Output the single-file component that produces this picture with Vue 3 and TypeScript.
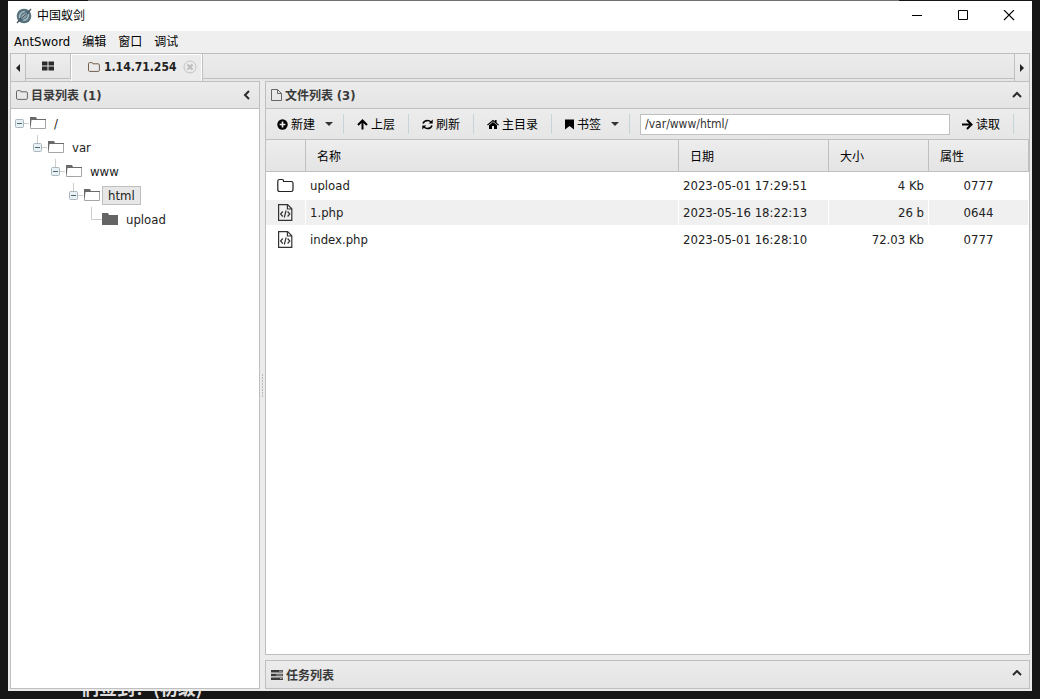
<script setup lang="ts">
import { ref } from 'vue'

interface TreeNode {
  name: string
  depth: number
  leaf?: boolean
}

interface FileRow {
  name: string
  date: string
  size: string
  mode: string
  folder?: boolean
}

interface Tool {
  icon: string
  label: string
  menu?: boolean
}

const menus: string[] = ['AntSword', '编辑', '窗口', '调试']

const tree: TreeNode[] = [
  { name: '/', depth: 0 },
  { name: 'var', depth: 1 },
  { name: 'www', depth: 2 },
  { name: 'html', depth: 3 },
  { name: 'upload', depth: 4, leaf: true },
]

const tools: Tool[] = [
  { icon: 'plus', label: '新建', menu: true },
  { icon: 'up', label: '上层' },
  { icon: 'refresh', label: '刷新' },
  { icon: 'home', label: '主目录' },
  { icon: 'bookmark', label: '书签', menu: true },
]

const files: FileRow[] = [
  { name: 'upload', date: '2023-05-01 17:29:51', size: '4 Kb', mode: '0777', folder: true },
  { name: '1.php', date: '2023-05-16 18:22:13', size: '26 b', mode: '0644' },
  { name: 'index.php', date: '2023-05-01 16:28:10', size: '72.03 Kb', mode: '0777' },
]

const path = ref('/var/www/html/')
const selected = ref('html')
</script>

<template>
  <div class="desktop">
    <div class="behind-top"></div>
    <div class="window">
      <header class="titlebar">
        <svg class="logo" viewBox="0 0 16 16" width="16" height="16">
          <circle cx="8" cy="8" r="7.3" fill="#54717d" />
          <path d="M3.6 10.200C3 6.800 5 4 8.800 3.600M12.400 5.800c.6 3.400-1.400 6.200-5.200 6.600" fill="none" stroke="#a9bac1" stroke-width="1.500" />
          <path d="M1 15 6 9.200M10 6.600 15 1" stroke="#44565f" stroke-width="1.300" />
          <path d="M5.400 10.400c-.6-2.600.8-4.800 3.400-4.900l2-1.300-.2 2.400c.4 2.200-1 4-3.200 4.200z" fill="#8fa5ae" />
          <path d="M6.200 9.800 10 6.200" stroke="#44565f" stroke-width="1" />
        </svg>
        <span class="title">中国蚁剑</span>
        <div class="controls">
          <button type="button" aria-label="最小化">
            <svg viewBox="0 0 12 12" width="12" height="12"><path d="M1 5.500h10" stroke="#000" /></svg>
          </button>
          <button type="button" aria-label="最大化">
            <svg viewBox="0 0 12 12" width="12" height="12"><path d="M1.500.5h9v9h-9z" fill="none" stroke="#000" /></svg>
          </button>
          <button type="button" aria-label="关闭">
            <svg viewBox="0 0 12 12" width="12" height="12"><path d="m1 0 10 10M11 0 1 10" stroke="#000" stroke-width="1.100" /></svg>
          </button>
        </div>
      </header>

      <nav class="menubar">
        <button v-for="m in menus" :key="m" type="button">{{ m }}</button>
      </nav>

      <main class="frame">
        <div class="tabbar">
          <button type="button" class="scroll left" aria-label="向左">
            <svg viewBox="0 0 4 8" width="4" height="8"><path d="M4 0v8L0 4z" fill="#222" /></svg>
          </button>
          <button type="button" class="tab home" aria-label="主页">
            <svg viewBox="0 0 12 10" width="12" height="10"><path d="M0 .5h5.500v4H0zM6.500.5H12v4H6.500zM0 5.500h5.500v4H0zM6.500 5.500H12v4H6.500z" fill="#2b2b2b" /></svg>
          </button>
          <div class="tab active">
            <svg viewBox="0 0 12 10" width="12" height="10"><path d="M.5 8.2V1.8q0-1.2 1.2-1.2h2.1q1 0 1 1v.2h5.400q1.200 0 1.200 1.200v5.200q0 1.200-1.200 1.200H1.700Q.5 9.400.5 8.200z" fill="none" stroke="#76604c" /></svg>
            <span>1.14.71.254</span>
            <button type="button" class="close" aria-label="关闭标签">
              <svg viewBox="0 0 14 14" width="14" height="14">
                <circle cx="7" cy="7" r="6" fill="none" stroke="#c3c3c3" />
                <path d="m4.500 4.500 5 5m0-5-5 5" stroke="#bcbcbc" stroke-width="2" />
              </svg>
            </button>
          </div>
          <div class="tab-rest"></div>
          <button type="button" class="scroll right" aria-label="向右">
            <svg viewBox="0 0 4 8" width="4" height="8"><path d="M0 0v8l4-4z" fill="#222" /></svg>
          </button>
        </div>

        <div class="body">
          <section class="side">
            <div class="panel-head">
              <svg viewBox="0 0 12 10" width="12" height="10"><path d="M.5 8.2V1.8q0-1.2 1.2-1.2h2.1q1 0 1 1v.2h5.400q1.200 0 1.200 1.200v5.200q0 1.200-1.200 1.200H1.700Q.5 9.400.5 8.200z" fill="none" stroke="#666" /></svg>
              <h2>目录列表 <span>(1)</span></h2>
              <button type="button" class="fold" aria-label="收起">
                <svg viewBox="0 0 10 10" width="10" height="10"><path d="M7 1 3 5l4 4" fill="none" stroke="#2b2b2b" stroke-width="2" /></svg>
              </button>
            </div>
            <ul class="tree">
              <li v-for="n in tree" :key="n.name" :class="['node', 'd' + n.depth]">
                <svg v-if="n.leaf" class="twig" viewBox="0 0 15 24" width="15" height="24"><path d="M4.500 0v12.500H15" fill="none" stroke="#ccc" /></svg>
                <button v-else type="button" class="twig" aria-label="折叠">
                  <svg viewBox="0 0 15 24" width="15" height="24">
                    <path v-if="n.depth" d="M4.500 0v8" stroke="#ccc" />
                    <path d="M9 12.500h5" stroke="#ccc" />
                    <rect x=".5" y="8.500" width="8" height="8" rx="1" fill="#e9f0f3" stroke="#a9b8bf" />
                    <path d="M2 12.500h5" stroke="#4a6873" />
                  </svg>
                </button>
                <svg class="dir" viewBox="0 0 17 14" width="17" height="14">
                  <path v-if="n.leaf" d="M0 1h6l1 2h9v10H0z" fill="#646464" />
                  <template v-else>
                    <path d="M.5 3.500h15v9H.5z" fill="#fff" stroke="#a6a6a6" />
                    <path d="M0 1h6l1 2h9v1H1.500L.8 10H0z" fill="#6a6a6a" />
                  </template>
                </svg>
                <button type="button" class="label" :class="{ selected: selected === n.name }" @click="selected = n.name">{{ n.name }}</button>
              </li>
            </ul>
          </section>

          <div class="splitter"><i v-for="i in 8" :key="i"></i></div>

          <div class="content">
            <section class="files">
              <div class="panel-head">
                <svg viewBox="0 0 11 12" width="11" height="12"><path d="M.5.5h6l4 4v7H.5zM6.500.5v4h4" fill="none" stroke="#666" /></svg>
                <h2>文件列表 <span>(3)</span></h2>
                <button type="button" class="fold" aria-label="收起">
                  <svg viewBox="0 0 10 10" width="10" height="10"><path d="m1 7 4-4 4 4" fill="none" stroke="#2b2b2b" stroke-width="2" /></svg>
                </button>
              </div>

              <div class="toolbar">
                <template v-for="t in tools" :key="t.icon">
                  <button type="button" class="tool" :class="{ drop: t.menu }">
                    <svg v-if="t.icon === 'plus'" viewBox="0 0 11 11" width="11" height="11">
                      <circle cx="5.500" cy="5.500" r="5.200" /><path d="M5.500 2.600v5.800M2.600 5.500h5.800" stroke="#eee" stroke-width="1.700" />
                    </svg>
                    <svg v-else-if="t.icon === 'up'" viewBox="0 0 11 11" width="11" height="11">
                      <path d="M5.500 10.500V1.800M1 6l4.500-4.500L10 6" fill="none" stroke="#000" stroke-width="2" />
                    </svg>
                    <svg v-else-if="t.icon === 'refresh'" viewBox="0 0 11 11" width="11" height="11">
                      <path d="M1 4.600C1.700 2.500 3.400 1.400 5.500 1.400c1.400 0 2.500.5 3.400 1.500M10 6.400C9.300 8.500 7.600 9.600 5.500 9.600c-1.400 0-2.500-.5-3.400-1.500" fill="none" stroke="#000" stroke-width="1.500" />
                      <path d="M10.700.6v4H6.700zM.3 10.400v-4h4z" />
                    </svg>
                    <svg v-else-if="t.icon === 'home'" viewBox="0 0 12 11" width="12" height="11">
                      <path d="M6 3 10 6.300V10H7V7H5v3H2V6.300zM6 .7l1.900 1.600V1h1.700v2.700L12 5.700l-.8.8L6 2.200.8 6.500 0 5.700z" />
                    </svg>
                    <svg v-else viewBox="0 0 9 11" width="9" height="11"><path d="M0 .5h9v10L4.500 7 0 10.500z" /></svg>
                    <span>{{ t.label }}</span>
                    <svg v-if="t.menu" class="caret" viewBox="0 0 8 4" width="8" height="4"><path d="M0 0h8L4 4z" fill="#333" /></svg>
                  </button>
                  <span class="sep"></span>
                </template>
                <input v-model="path" type="text" aria-label="路径" spellcheck="false" />
                <button type="button" class="tool read">
                  <svg viewBox="0 0 11 11" width="11" height="11"><path d="M0 5.500h9M5 1l4.500 4.500L5 10" fill="none" stroke="#000" stroke-width="2" /></svg>
                  <span>读取</span>
                </button>
                <span class="sep last"></span>
              </div>

              <table>
                <colgroup><col class="c-icon" /><col /><col class="c-date" /><col class="c-num" /><col class="c-num" /></colgroup>
                <thead>
                  <tr><th></th><th>名称</th><th>日期</th><th>大小</th><th>属性</th></tr>
                </thead>
                <tbody>
                  <tr v-for="f in files" :key="f.name">
                    <td class="icon">
                      <svg v-if="f.folder" viewBox="0 0 17 17" width="17" height="17"><path d="M.8 12.800V4.200Q.8 2.500 2.500 2.500h2.800q1.200 0 1.200 1.200v.8h7.800q1.700 0 1.700 1.700v6.600q0 1.700-1.700 1.700H2.500q-1.700 0-1.700-1.700z" fill="none" stroke="#222" stroke-width="1.200" /></svg>
                      <svg v-else viewBox="0 0 17 17" width="17" height="17">
                        <path d="M1.600.6h9l4.200 4.200v11.600H1.600zM10.400.6v4.400h4.400" fill="none" stroke="#333" stroke-width="1.200" />
                        <path d="M5.800 7.500 3.600 10l2.200 2.500M10.600 7.500l2.200 2.500-2.200 2.500M9.100 6.500l-1.800 7" fill="none" stroke="#333" stroke-width="1.200" />
                      </svg>
                    </td>
                    <td>{{ f.name }}</td>
                    <td>{{ f.date }}</td>
                    <td class="size">{{ f.size }}</td>
                    <td class="mode">{{ f.mode }}</td>
                  </tr>
                </tbody>
              </table>
            </section>

            <section class="tasks">
              <div class="panel-head">
                <svg viewBox="0 0 12 10" width="12" height="10">
                  <path d="M0 0h12v2.500H0zM0 3.700h12v2.500H0zM0 7.400h12v2.500H0z" fill="#3a3a3a" />
                  <path d="M8 1.200h3.500M5 5h6.500M9 8.600h2.500" stroke="#aaa" />
                </svg>
                <h2>任务列表</h2>
                <button type="button" class="fold" aria-label="展开">
                  <svg viewBox="0 0 10 10" width="10" height="10"><path d="m1 5 4-4 4 4" fill="none" stroke="#2b2b2b" stroke-width="2" /></svg>
                </button>
              </div>
            </section>
          </div>
        </div>
      </main>
    </div>
    <div class="behind-bottom"><span>们签到！(初级)</span></div>
  </div>
</template>

<style>
html,
body {
  margin: 0;
  background: #161616;
}
</style>

<style scoped>
* {
  box-sizing: border-box;
}
.desktop {
  height: 100vh;
  display: flex;
  flex-direction: column;
  padding: 0 8px;
  background: #161616;
  color: #222;
  font: 13px/18px "DejaVu Sans Condensed", "Noto Sans", "Noto Sans CJK SC", sans-serif;
}
button {
  display: flex;
  align-items: center;
  justify-content: center;
  margin: 0;
  padding: 0;
  border: 0;
  background: none;
  color: inherit;
  font: inherit;
}
svg {
  display: block;
  flex: none;
}
.behind-top {
  flex: none;
  height: 1px;
  margin: 0 13% 0 80px;
  background: #707070;
}
.behind-bottom {
  flex: none;
  height: 8px;
  padding: 0 0 2px 73px;
  overflow: hidden;
  display: flex;
  align-items: flex-end;
  color: #ddd;
  font: bold 18px/20px "Noto Sans CJK SC", sans-serif;
}
.window {
  flex: 1;
  min-height: 0;
  display: flex;
  flex-direction: column;
  background: #ebebeb;
}
.titlebar {
  flex: none;
  height: 30px;
  display: flex;
  align-items: center;
  padding-left: 8px;
  background: #fff;
  color: #000;
}
.title {
  margin-left: 5px;
  font-size: 12px;
}
.controls {
  display: flex;
  height: 100%;
  margin-left: auto;
}
.controls button {
  width: 46px;
}
.menubar {
  flex: none;
  height: 22px;
  display: flex;
  align-items: center;
  gap: 12px;
  padding-left: 6px;
  background: #efefef;
  color: #000;
}
.menubar button {
  font-size: 12px;
}
.menubar button:first-child {
  font-size: 13px;
}
.frame {
  flex: 1;
  min-height: 0;
  display: flex;
  flex-direction: column;
  margin: 0 2px;
  padding-bottom: 2px;
}
.tabbar {
  flex: none;
  height: 28px;
  display: flex;
  align-items: flex-start;
  border: 1px solid #bfbfbf;
  border-bottom: 0;
  background: #e6e6e6;
}
.scroll {
  width: 15px;
  height: 27px;
  background: linear-gradient(#efefef, #e4e4e4);
}
.scroll.left {
  border-right: 1px solid #bfbfbf;
}
.scroll.right {
  border-left: 1px solid #bfbfbf;
}
.tab {
  height: 25px;
  border-right: 1px solid #bfbfbf;
  border-bottom: 1px solid #bfbfbf;
  background: linear-gradient(#eee, #e4e4e4);
}
.tab.home {
  width: 45px;
}
.tab.active {
  height: 27px;
  display: flex;
  align-items: center;
  padding: 0 5px 2px 17px;
  border-bottom: 0;
  background: #ebebeb;
  box-shadow: inset 1px 1px #fff, inset -1px 0 #fff;
  font-size: 12px;
  font-weight: bold;
}
.tab.active span {
  margin: 0 7px 0 4px;
}
.tab-rest {
  flex: 1;
  height: 25px;
  border-bottom: 1px solid #bfbfbf;
  background: linear-gradient(#ececec, #e5e5e5);
}
.body {
  flex: 1;
  min-height: 0;
  display: flex;
}
.side {
  flex: 0 0 250px;
  display: flex;
  flex-direction: column;
  border: 1px solid #bfbfbf;
  background: #fff;
}
.panel-head {
  flex: none;
  height: 27px;
  display: flex;
  align-items: center;
  gap: 3px;
  padding: 0 7px 0 5px;
  border-bottom: 1px solid #bfbfbf;
  background: linear-gradient(#ececec, #e4e4e4);
  color: #3a3a3a;
}
h2 {
  margin: 0;
  padding-top: 2px;
  font-size: 12px;
  line-height: 18px;
  font-weight: bold;
}
h2 span {
  font-size: 13px;
}
.fold {
  margin-left: auto;
}
.tree {
  flex: 1;
  margin: 0;
  padding: 2px 4px;
  list-style: none;
}
.node {
  height: 24px;
  display: flex;
  align-items: center;
}
.d1 { padding-left: 18px; }
.d2 { padding-left: 36px; }
.d3 { padding-left: 54px; }
.d4 { padding-left: 72px; }
.label {
  height: 19px;
  margin-left: 1px;
  padding: 2px 5px 0;
  border: 1px solid transparent;
}
.label.selected {
  border-color: #bfbfbf;
  background: #e7e7e7;
}
.splitter {
  flex: 0 0 5px;
  display: flex;
  flex-direction: column;
  align-items: center;
  justify-content: center;
  gap: 1px;
}
.splitter i {
  width: 1px;
  height: 2px;
  background: #bbb;
}
.content {
  flex: 1;
  min-width: 0;
  display: flex;
  flex-direction: column;
  gap: 5px;
}
.files {
  flex: 1;
  min-height: 0;
  border: 1px solid #bfbfbf;
  background: #fff;
}
.tasks {
  flex: none;
  border: 1px solid #bfbfbf;
}
.tasks .panel-head {
  border-bottom: 0;
}
.toolbar {
  height: 31px;
  display: flex;
  align-items: center;
  border-bottom: 1px solid #bfbfbf;
  background: linear-gradient(#ececec, #e6e6e6);
  color: #000;
  font-size: 12px;
}
.tool {
  flex: none;
  height: 24px;
  gap: 3px;
  padding: 0 13px;
}
.tool span {
  padding-top: 2px;
}
.tool.drop {
  padding-right: 10px;
}
.tool:first-child {
  padding-left: 11px;
}
.tool.read {
  padding-left: 12px;
}
.caret {
  margin-left: 7px;
}
.sep {
  flex: none;
  width: 1px;
  height: 20px;
  background: #c5d5da;
}
.sep.last {
  margin-right: 15px;
}
input {
  flex: 1;
  min-width: 0;
  height: 21px;
  margin-left: 10px;
  padding: 0 4px;
  border: 1px solid #bfbfbf;
  outline: 0;
  background: #fff;
  color: #333;
  font: 12px/18px "DejaVu Sans Condensed", "Noto Sans", sans-serif;
}
table {
  width: 100%;
  table-layout: fixed;
  border-collapse: separate;
  border-spacing: 0;
}
.c-icon { width: 40px; }
.c-date { width: 150px; }
.c-num { width: 100px; }
th {
  height: 32px;
  padding: 2px 11px 0;
  border-right: 1px solid #bfbfbf;
  border-bottom: 1px solid #bfbfbf;
  background: linear-gradient(#ededed, #e4e4e4);
  color: #000;
  font-size: 12px;
  font-weight: normal;
  text-align: left;
}
td {
  height: 27px;
  padding: 0 4px;
  border: 1px solid #fff;
  border-left: 0;
}
tr:nth-child(even) td {
  background: #f0f0f0;
}
td.icon {
  padding: 0 11px;
}
td.size {
  text-align: right;
}
td.mode {
  text-align: center;
}
</style>
